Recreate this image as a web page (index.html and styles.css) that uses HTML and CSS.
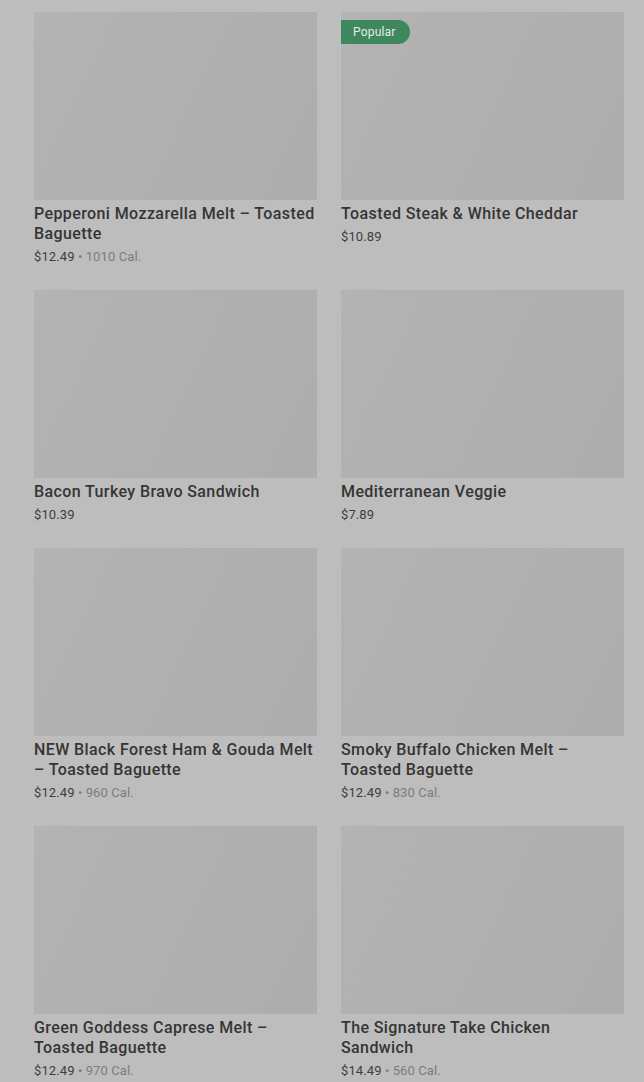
FILE: index.html
```html
<!DOCTYPE html>
<html lang="en">
<head>
    <meta charset="UTF-8">
    <title>Menu</title>
    <link rel="stylesheet" href="styles.css">
</head>
<body>
<div class="menu">
    <div class="item">
        <div class="pic"></div>
        <div class="name">Pepperoni Mozzarella Melt – Toasted Baguette</div>
        <div class="meta">$12.49 <span class="cal">• 1010 Cal.</span></div>
    </div>
    <div class="item">
        <div class="pic"><span class="badge">Popular</span></div>
        <div class="name">Toasted Steak &amp; White Cheddar</div>
        <div class="meta">$10.89</div>
    </div>
    <div class="item">
        <div class="pic"></div>
        <div class="name">Bacon Turkey Bravo Sandwich</div>
        <div class="meta">$10.39</div>
    </div>
    <div class="item">
        <div class="pic"></div>
        <div class="name">Mediterranean Veggie</div>
        <div class="meta">$7.89</div>
    </div>
    <div class="item">
        <div class="pic"></div>
        <div class="name">NEW Black Forest Ham &amp; Gouda Melt – Toasted Baguette</div>
        <div class="meta">$12.49 <span class="cal">• 960 Cal.</span></div>
    </div>
    <div class="item">
        <div class="pic"></div>
        <div class="name">Smoky Buffalo Chicken Melt – Toasted Baguette</div>
        <div class="meta">$12.49 <span class="cal">• 830 Cal.</span></div>
    </div>
    <div class="item">
        <div class="pic"></div>
        <div class="name">Green Goddess Caprese Melt – Toasted Baguette</div>
        <div class="meta">$12.49 <span class="cal">• 970 Cal.</span></div>
    </div>
    <div class="item">
        <div class="pic"></div>
        <div class="name">The Signature Take Chicken Sandwich</div>
        <div class="meta">$14.49 <span class="cal">• 560 Cal.</span></div>
    </div>
</div>
</body>
</html>
```

FILE: styles.css
```css
html, body {
    margin: 0;
    padding: 0;
    background: #bdbdbd;
}

body {
    font-family: Roboto, "Noto Sans", sans-serif;
    color: #333;
    overflow: hidden;
}

.menu {
    display: grid;
    grid-template-columns: 283px 283px;
    column-gap: 24px;
    row-gap: 24px;
    padding: 12px 20px 0 34px;
}

.pic {
    position: relative;
    height: 188px;
    background: linear-gradient(115deg, #b3b3b3 0%, #b0b0b0 50%, #adadad 100%);
}

.badge {
    position: absolute;
    left: 0;
    top: 8px;
    height: 24px;
    line-height: 24px;
    padding: 0 14px 0 12px;
    font-size: 12px;
    letter-spacing: 0.2px;
    color: #e4ece7;
    background: #3f875c;
    border-radius: 0 12px 12px 0;
}

.name {
    margin-top: 4px;
    font-size: 16px;
    line-height: 20px;
    font-weight: 500;
    letter-spacing: 0.4px;
    color: #353535;
}

.meta {
    margin-top: 3px;
    font-size: 13px;
    line-height: 19px;
    letter-spacing: 0.1px;
    color: #3e3e3e;
}

.cal {
    color: #7c7c7c;
}
```
